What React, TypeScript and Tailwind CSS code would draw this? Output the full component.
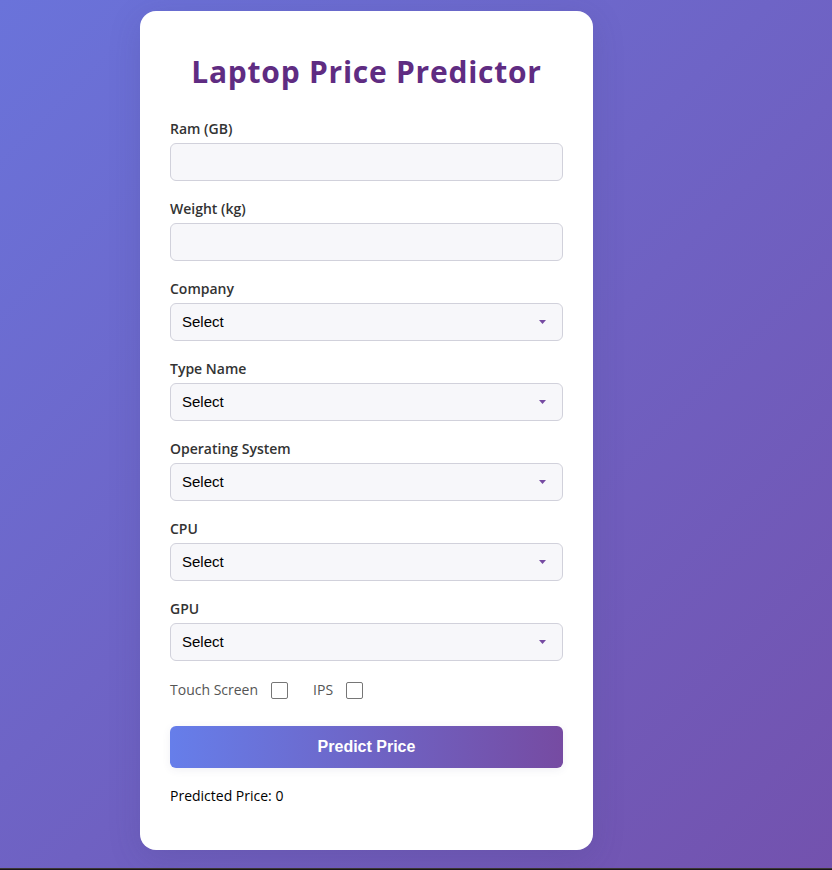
import React, { useState } from "react";

const selects = [
  { id: "company", label: "Company", options: ["Apple", "HP", "Acer", "Asus", "Dell", "Lenovo"] },
  { id: "typename", label: "Type Name", options: ["Ultrabook", "Notebook", "Gaming", "Workstation"] },
  { id: "opsys", label: "Operating System", options: ["Windows", "Mac", "Linux", "Other"] },
  { id: "cpu", label: "CPU", options: ["Intel Core i3", "Intel Core i5", "Intel Core i7", "AMD"] },
  { id: "gpu", label: "GPU", options: ["Intel", "AMD", "Nvidia"] },
];

const labelClass = "block mb-1 text-sm leading-5 font-semibold text-[#333333]";
const fieldClass =
  "block w-full h-[38px] px-[11px] rounded-md border border-[#d1d1db] bg-[#f7f7fa] font-['Liberation_Sans',Arial,sans-serif] text-[15px] text-black outline-none focus:border-[#764ba2]";

function NumberField({ id, label }: { id: string; label: string }) {
  return (
    <div>
      <label htmlFor={id} className={labelClass}>
        {label}
      </label>
      <input id={id} name={id} type="text" inputMode="decimal" className={fieldClass} />
    </div>
  );
}

function SelectField({ id, label, options }: { id: string; label: string; options: string[] }) {
  return (
    <div>
      <label htmlFor={id} className={labelClass}>
        {label}
      </label>
      <div className="relative">
        <select id={id} name={id} defaultValue="" className={`${fieldClass} appearance-none`}>
          <option value="">Select</option>
          {options.map((option) => (
            <option key={option} value={option}>
              {option}
            </option>
          ))}
        </select>
        <svg
          viewBox="0 0 7 4"
          className="pointer-events-none absolute right-[17px] top-[17px] h-1 w-[7px] fill-[#764ba2]"
          aria-hidden="true"
        >
          <path d="M0 0h7L3.5 4z" />
        </svg>
      </div>
    </div>
  );
}

function CheckField({ id, label }: { id: string; label: string }) {
  return (
    <div className="flex items-center gap-[13px]">
      <label htmlFor={id} className="text-sm leading-5 text-[#555555]">
        {label}
      </label>
      <input
        id={id}
        name={id}
        type="checkbox"
        className="size-[17px] appearance-none rounded-xs border border-[#767676] bg-white checked:bg-[#764ba2]"
      />
    </div>
  );
}

export default function App() {
  const [price] = useState(0);

  return (
    <div className="flex min-h-screen flex-col font-['Open_Sans','Noto_Sans',sans-serif]">
      <main className="flex-1 bg-[linear-gradient(135deg,#6a73da_0%,#7352ae_100%)] px-4 pt-[11px] pb-[18px] sm:pl-[140px]">
        <form
          onSubmit={(e) => e.preventDefault()}
          className="w-full max-w-[453px] rounded-2xl bg-white px-[30px] pt-10 pb-11 shadow-[0_8px_32px_rgba(60,60,120,0.18)]"
        >
          <h1 className="mb-[26px] text-center text-3xl leading-[42px] font-bold tracking-wide text-[#5f2c82]">
            Laptop Price Predictor
          </h1>

          <div className="flex flex-col gap-[18px]">
            <NumberField id="ram" label="Ram (GB)" />
            <NumberField id="weight" label="Weight (kg)" />
            {selects.map((field) => (
              <SelectField key={field.id} {...field} />
            ))}
          </div>

          <div className="mt-[19px] mb-[26px] flex items-center gap-[25px]">
            <CheckField id="touchscreen" label="Touch Screen" />
            <CheckField id="ips" label="IPS" />
          </div>

          <button
            type="submit"
            className="block h-[42px] w-full rounded-md bg-[linear-gradient(90deg,#667eea_0%,#764ba2_100%)] font-['Liberation_Sans',Arial,sans-serif] text-base font-bold text-white shadow-[0_2px_8px_rgba(60,60,120,0.08)]"
          >
            Predict Price
          </button>

          <p className="mt-[18px] text-sm leading-5 text-black">Predicted Price: {price}</p>
        </form>
      </main>
      <div className="h-0.5 border-t border-[#3b3735] bg-[#1a151c]" />
    </div>
  );
}
